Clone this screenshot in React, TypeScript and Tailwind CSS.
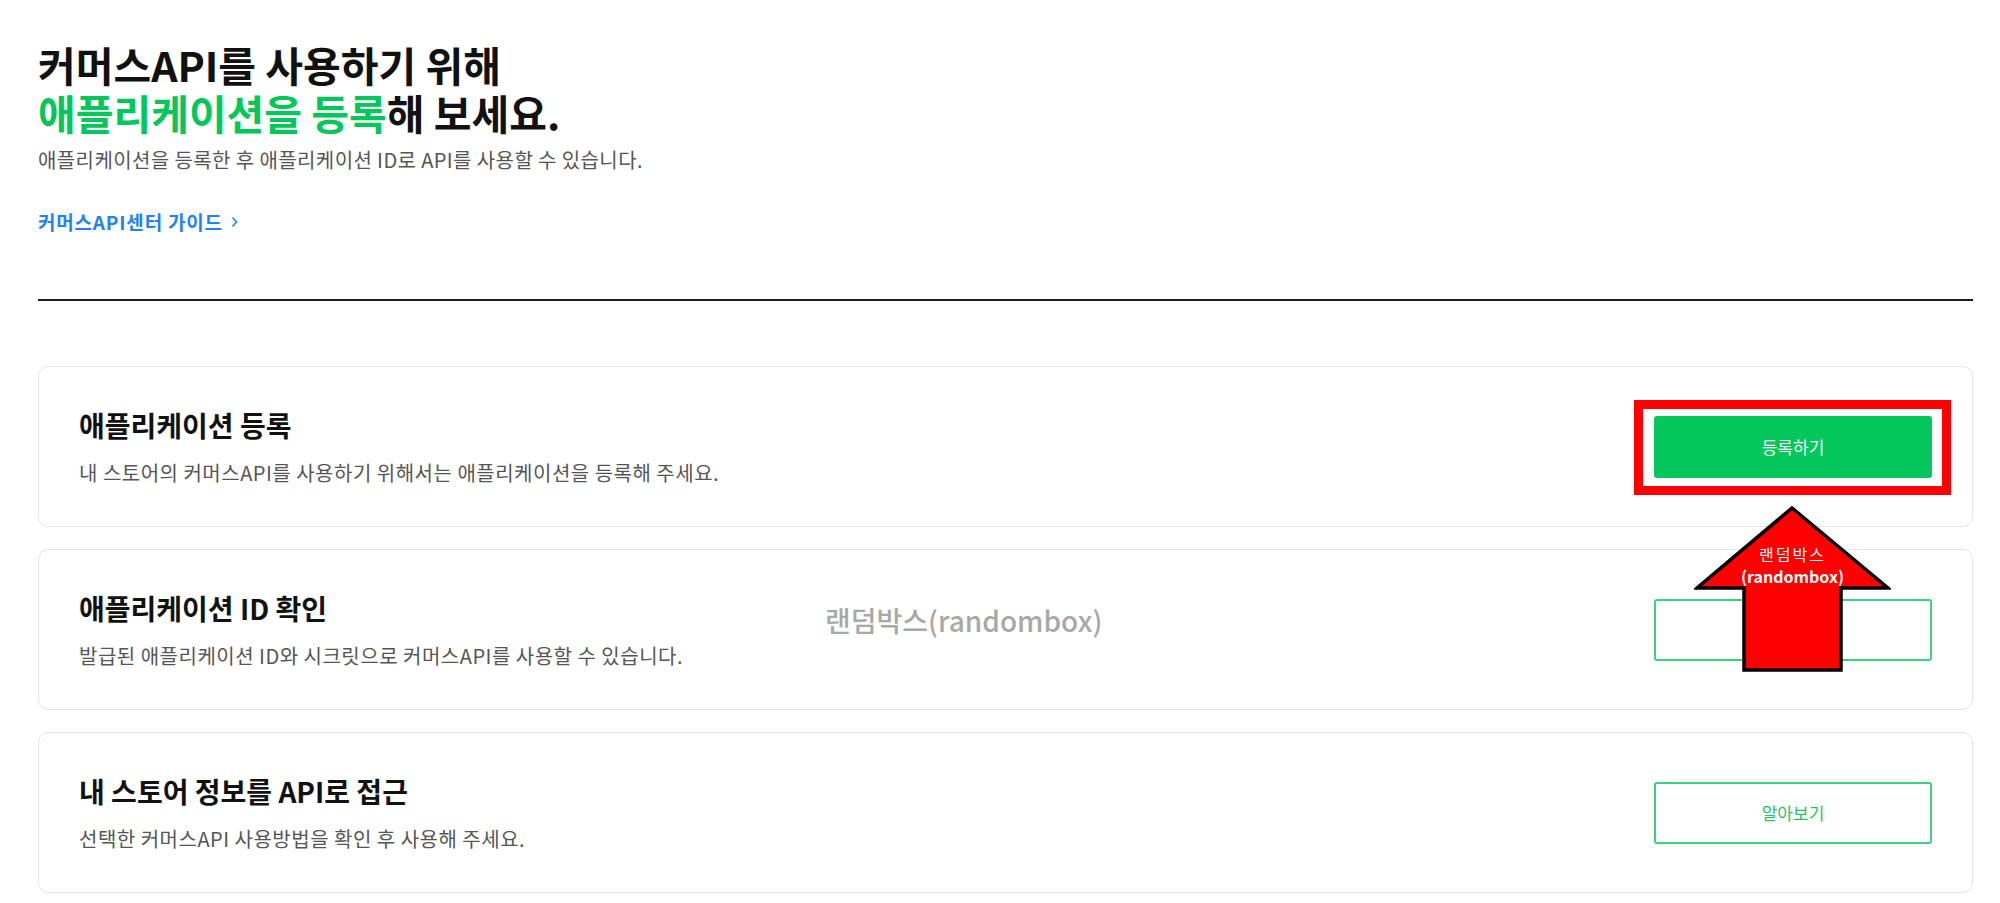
import React from "react";

function Card({
  title,
  desc,
  button,
  filled,
  children,
}: {
  title: string;
  desc: string;
  button: string;
  filled?: boolean;
  children?: React.ReactNode;
}) {
  return (
    <div className="relative flex h-[161px] items-center justify-between rounded-[10px] border border-[#e4e4e4] bg-white pl-[40px] pr-[40px]">
      <div className="flex flex-col">
        <div className="text-[28px] font-bold leading-[36px] text-[#111]">{title}</div>
        <div className="mt-[16px] text-[20px] leading-[28px] tracking-[0.5px] text-[#555]">{desc}</div>
      </div>
      {filled ? (
        <button className="flex h-[62px] w-[278px] items-center justify-center rounded-[3px] bg-[#03c75a] text-[17px] text-white">
          {button}
        </button>
      ) : (
        <button className="flex h-[62px] w-[278px] items-center justify-center rounded-[3px] border-2 border-[#38d37f] bg-white text-[17px] text-[#1fc46b]">
          {button}
        </button>
      )}
      {children}
    </div>
  );
}

export default function App() {
  return (
    <div className="relative min-h-[903px] w-full bg-white font-['Noto_Sans_CJK_KR','Noto_Sans',sans-serif]">
      <div className="pl-[38px] pr-[27px] pt-[40px]">
        <h1 className="text-[41px] font-bold leading-[48px] text-[#111]">
          <span className="block">커머스API를 사용하기 위해</span>
          <span className="block">
            <span className="text-[#03c75a]">애플리케이션을 등록</span>해 보세요.
          </span>
        </h1>
        <p className="mt-[10px] text-[20px] leading-[28px] tracking-[0.4px] text-[#555]">
          애플리케이션을 등록한 후 애플리케이션 ID로 API를 사용할 수 있습니다.
        </p>
        <a className="mt-[34px] flex items-center gap-[8px] text-[19px] font-bold leading-[28px] tracking-[0.8px] text-[#1f82f5]">
          커머스API센터 가이드
          <svg width="7" height="12" viewBox="0 0 7 12" fill="none">
            <path d="M1.5 1.5L5.5 6L1.5 10.5" stroke="#1f82f5" strokeWidth="1.6" />
          </svg>
        </a>
        <div className="mt-[63px] h-[2px] bg-[#1a1a1a]" />
        <div className="mt-[65px] flex flex-col gap-[22px]">
          <Card
            title="애플리케이션 등록"
            desc="내 스토어의 커머스API를 사용하기 위해서는 애플리케이션을 등록해 주세요."
            button="등록하기"
            filled
          />
          <Card
            title="애플리케이션 ID 확인"
            desc="발급된 애플리케이션 ID와 시크릿으로 커머스API를 사용할 수 있습니다."
            button="확인하기"
          >
            <div className="pointer-events-none absolute left-[786px] top-[52px] text-[28px] font-medium leading-[36px] text-[#a8a8a8]">
              랜덤박스(randombox)
            </div>
          </Card>
          <Card
            title="내 스토어 정보를 API로 접근"
            desc="선택한 커머스API 사용방법을 확인 후 사용해 주세요."
            button="알아보기"
          />
        </div>
      </div>

      {/* annotation: red box */}
      <div className="pointer-events-none absolute left-[1634px] top-[400px] h-[95px] w-[317px] border-[9px] border-[#ff0000]" />

      {/* annotation: arrow */}
      <div className="pointer-events-none absolute left-[1694px] top-[505px] h-[168px] w-[197px]">
        <svg width="197" height="168" viewBox="0 0 197 168" className="absolute left-0 top-0">
          <polygon
            points="98,3 194,83 147,83 147,165 50,165 50,83 3,83"
            fill="#ff0000"
            stroke="#000"
            strokeWidth="3.5"
            strokeLinejoin="miter"
          />
        </svg>
        <div className="absolute left-0 top-[38px] flex w-full flex-col items-center font-['Noto_Sans_CJK_KR',sans-serif] text-white">
          <span className="text-[16px] leading-[22px] tracking-[2px]">랜덤박스</span>
          <span className="text-[16px] font-bold leading-[22px]">(randombox)</span>
        </div>
      </div>
    </div>
  );
}
